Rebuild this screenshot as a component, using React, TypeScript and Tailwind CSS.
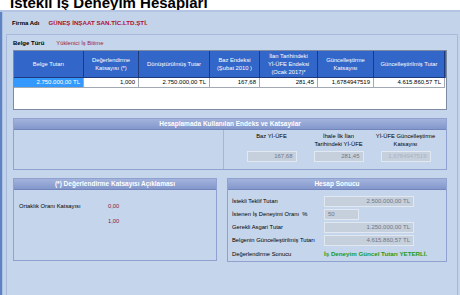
import type { ReactNode } from 'react';

const cols = [
  { label: ['Belge Tutarı'], value: '2.750.000,00 TL', selected: true },
  { label: ['Değerlendirme', 'Katsayısı (*)'], value: '1,000' },
  { label: ['Dönüştürülmüş Tutar'], value: '2.750.000,00 TL' },
  { label: ['Baz Endeksi', '(Şubat 2010 )'], value: '167,68' },
  { label: ['İlan Tarihindeki', 'Yİ-ÜFE Endeksi', '(Ocak 2017)*'], value: '281,45' },
  { label: ['Güncelleştirme', 'Katsayısı'], value: '1,6784947519' },
  { label: ['Güncelleştirilmiş Tutar'], value: '4.615.860,57 TL' },
];

function GroupBox({ title, className, children }: { title: string; className: string; children: ReactNode }) {
  return (
    <div className={`flex flex-col border border-[#8fa1cf] ${className}`}>
      <div className="flex h-[11px] items-center justify-center border-b border-[#7286bd] bg-gradient-to-b from-[#a3b3dd] to-[#8397cb] text-[6.5px] font-bold text-white">
        {title}
      </div>
      {children}
    </div>
  );
}

function Field({ value, className, faded }: { value: string; className: string; faded?: boolean }) {
  return (
    <div
      className={`h-[11px] border border-[#e2e8f1] bg-[#c6cfdc] px-[3px] text-[6px] leading-[9px] ${faded ? 'text-[#a9b2c0]' : 'text-[#6f7785]'} ${className}`}
    >
      {value}
    </div>
  );
}

export default function App() {
  return (
    <div className="relative h-[295px] w-[460px] overflow-hidden bg-[#c3d4ea] font-['Liberation_Sans',Arial,sans-serif] text-black">
      {/* title strip */}
      <div className="h-[10px] overflow-hidden bg-white pl-[10px]">
        <div className="mt-[-5px] text-[15px] font-bold leading-[15px]">İstekli İş Deneyim Hesapları</div>
      </div>
      <div className="h-[2px] bg-[#b3c5e2]" />

      <div className="flex h-[283px]">
        <div className="w-[3px] border-r border-[#a9c0e2] bg-[#5f83c2]" />
        <div className="flex flex-1 flex-col">
          {/* firma */}
          <div className="flex h-[22px] items-center gap-[9px] pl-[9px]">
            <span className="text-[6px] font-bold">Firma Adı</span>
            <span className="text-[6.2px] font-bold text-[#b0102e]">GÜNEŞ İNŞAAT SAN.TİC.LTD.ŞTİ.</span>
          </div>

          {/* main panel */}
          <div className="mr-[2px] ml-[3px] flex flex-1 flex-col border-t border-r border-l border-[#a7badb] bg-[#c5d6ec] pl-[6px]">
            <div className="flex h-[15px] items-end gap-[12px] pb-[2px]">
              <span className="text-[6px] font-bold">Belge Türü</span>
              <span className="text-[5.8px] text-[#9b1b3a]">Yüklenici İş Bitime</span>
            </div>

            {/* table */}
            <div className="h-[60px] w-[434px] border border-[#7c8aa3] bg-white">
              <div className="grid h-[27px] grid-cols-[70px_55px_71px_50px_58px_56px_71px] bg-[#3266c8]">
                {cols.map((c) => (
                  <div
                    key={c.label.join()}
                    className="flex flex-col items-center justify-center border-r border-b border-[#1d3b7c] text-center text-[5.8px] leading-[8px] text-white"
                  >
                    {c.label.map((l) => (
                      <span key={l}>{l}</span>
                    ))}
                  </div>
                ))}
              </div>
              <div className="grid h-[10px] grid-cols-[70px_55px_71px_50px_58px_56px_71px]">
                {cols.map((c) => (
                  <div
                    key={c.value + c.label[0]}
                    className={`border-r border-b border-[#a3a9b3] pr-[3px] text-right text-[6px] leading-[9px] ${c.selected ? 'bg-[#3399ff] text-white' : 'text-black'}`}
                  >
                    {c.value}
                  </div>
                ))}
              </div>
            </div>

            {/* indices */}
            <GroupBox title="Hesaplamada Kullanılan Endeks ve Katsayılar" className="mt-[8px] h-[52px] w-[434px]">
              <div className="flex flex-1">
                <div className="w-[210px] border-r border-[#a6b4d6]" />
                <div className="flex pl-[14px] pt-[2px]">
                  {[
                    { l: ['Baz Yİ-ÜFE'], v: '167,68' },
                    { l: ['İhale İlk İlan', 'Tarihindeki Yİ-ÜFE'], v: '281,45' },
                    { l: ['Yİ-ÜFE Güncelleştirme', 'Katsayısı'], v: '1,6784947519', f: true },
                  ].map((x) => (
                    <div key={x.v} className="flex w-[67px] flex-col items-center">
                      <div className="flex h-[16px] flex-col items-center text-[5.8px] leading-[8px]">
                        {x.l.map((s) => (
                          <span key={s}>{s}</span>
                        ))}
                      </div>
                      <Field value={x.v} faded={x.f} className="mt-[3px] w-[50px] text-right" />
                    </div>
                  ))}
                </div>
              </div>
            </GroupBox>

            {/* bottom */}
            <div className="mt-[8px] flex gap-[10px]">
              <GroupBox title="(*) Değerlendirme Katsayısı Açıklaması" className="h-[83px] w-[204px]">
                <div className="flex flex-col gap-[7px] pt-[12px] pl-[5px] text-[5.8px] leading-[8px]">
                  <div className="flex">
                    <span className="w-[89px]">Ortaklık Oranı Katsayısı</span>
                    <span className="text-[#8b1a3a]">0,00</span>
                  </div>
                  <div className="flex">
                    <span className="w-[89px]" />
                    <span className="text-[#8b1a3a]">1,00</span>
                  </div>
                </div>
              </GroupBox>

              <GroupBox title="Hesap Sonucu" className="h-[84px] w-[220px]">
                <div className="flex flex-col gap-[2px] pt-[6px] pl-[4px] text-[5.8px]">
                  <div className="flex items-center">
                    <span className="w-[92px]">İstekli Teklif Tutarı</span>
                    <Field value="2.500.000,00 TL" className="w-[90px] text-right" />
                  </div>
                  <div className="flex items-center">
                    <span className="w-[92px]">İstenen İş Deneyimi Oranı&nbsp;&nbsp;%</span>
                    <Field value="50" className="w-[35px] text-left" />
                  </div>
                  <div className="flex items-center">
                    <span className="w-[92px]">Gerekli Asgari Tutar</span>
                    <Field value="1.250.000,00 TL" className="w-[90px] text-right" />
                  </div>
                  <div className="flex items-center">
                    <span className="w-[92px]">Belgenin Güncelleştirilmiş Tutarı</span>
                    <Field value="4.615.860,57 TL" className="w-[90px] text-right" />
                  </div>
                  <div className="mt-[2px] flex items-center leading-[8px]">
                    <span className="w-[92px]">Değerlendirme Sonucu</span>
                    <span className="text-[6.2px] font-bold text-[#1c9a1c]">İş Deneyim Güncel Tutarı YETERLİ.</span>
                  </div>
                </div>
              </GroupBox>
            </div>
          </div>
        </div>
      </div>
    </div>
  );
}
